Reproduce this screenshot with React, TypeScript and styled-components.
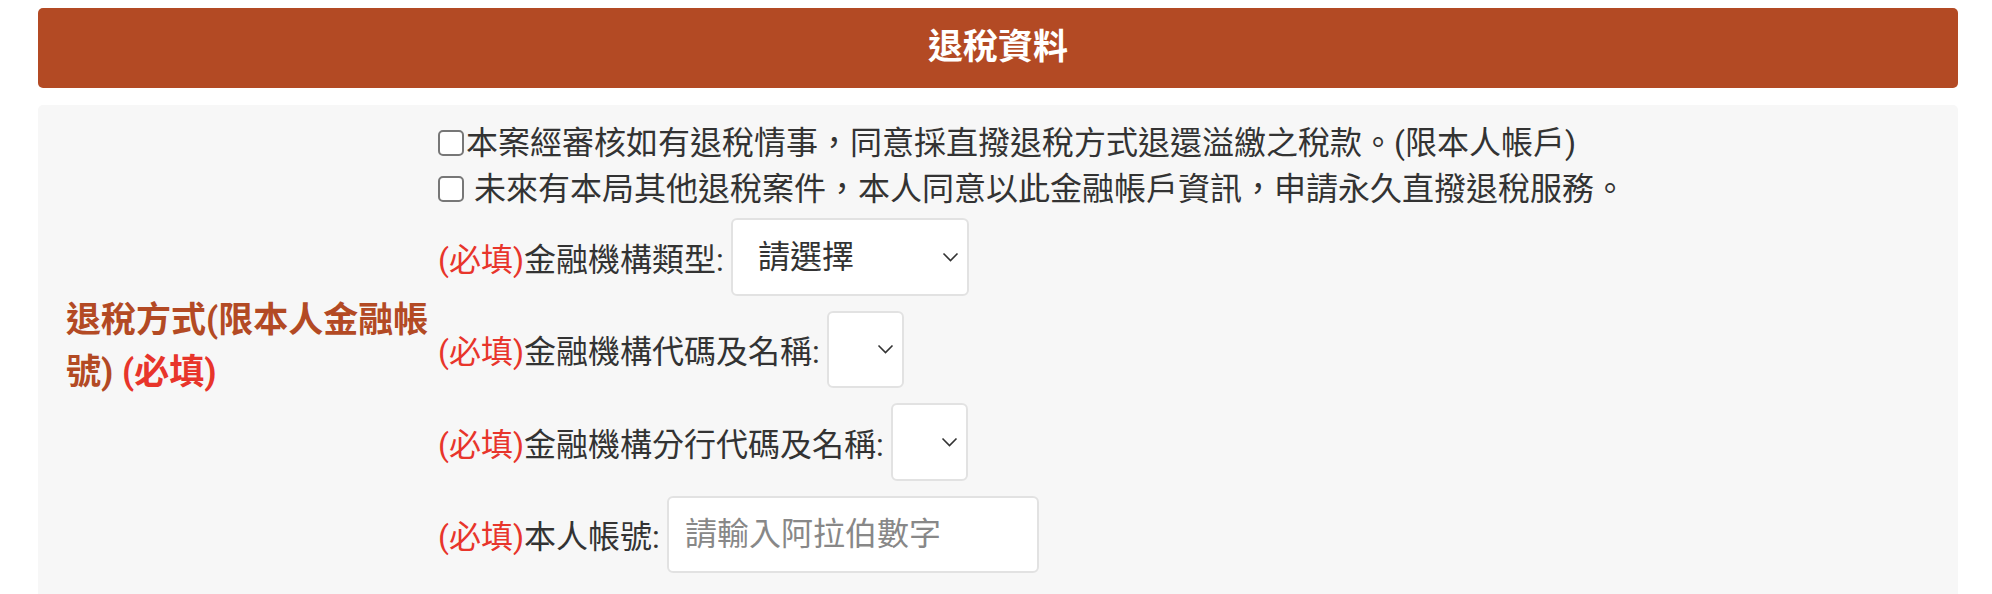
import React from "react";
import styled, { createGlobalStyle } from "styled-components";

const GlobalStyle = createGlobalStyle`
  html, body {
    margin: 0;
    padding: 0;
    background: #fff;
    overflow: hidden;
  }
  body {
    font-family: Roboto, "Noto Sans CJK TC", "Noto Sans", sans-serif;
    color: #333;
  }
`;

const Page = styled.div`
  padding: 8px 34px 0 38px;
  display: flex;
  flex-direction: column;
  gap: 17px;
`;

const Header = styled.div`
  height: 80px;
  line-height: 80px;
  background: #b34a24;
  color: #fff;
  border-radius: 5px;
  text-align: center;
  font-size: 35px;
  font-weight: 700;
`;

const Panel = styled.div`
  background: #f7f7f7;
  border-radius: 5px 5px 0 0;
  display: grid;
  grid-template-columns: 400px 1fr;
  padding: 15px 0 21px;
`;

const FieldLabel = styled.div`
  align-self: center;
  padding: 0 4px 0 28px;
  font-size: 35px;
  line-height: 52px;
  font-weight: 700;
  color: #b34a24;
`;

const Required = styled.span<{ $bold?: boolean }>`
  color: #e8352b;
  font-weight: ${(p) => (p.$bold ? 700 : 400)};
`;

const FieldBody = styled.div`
  display: flex;
  flex-direction: column;
  font-size: 32px;
`;

const CheckLine = styled.label`
  display: flex;
  align-items: center;
  height: 46px;
  line-height: 46px;
  white-space: nowrap;
`;

const Check = styled.input<{ $gap: number }>`
  appearance: none;
  width: 26px;
  height: 26px;
  margin: 0 ${(p) => p.$gap}px 0 0;
  border: 2px solid #777;
  border-radius: 5px;
  background: #fff;
  flex: none;
`;

const FormRow = styled.div<{ $first?: boolean }>`
  display: flex;
  align-items: center;
  height: 77.5px;
  margin-top: ${(p) => (p.$first ? 6 : 15)}px;
  white-space: nowrap;
`;

const SelectWrap = styled.div<{ $width: number }>`
  position: relative;
  width: ${(p) => p.$width}px;
  height: 100%;
  margin-left: 7px;
`;

const Select = styled.select`
  appearance: none;
  width: 100%;
  height: 100%;
  box-sizing: border-box;
  border: 2px solid #e2e2e2;
  border-radius: 6px;
  background: #fff;
  padding: 0 0 0 25px;
  font: inherit;
  font-size: 32px;
  color: #333;
  outline: none;
`;

const Chevron = styled.svg`
  position: absolute;
  right: 10px;
  top: 50%;
  margin-top: -5px;
  pointer-events: none;
`;

const TextInput = styled.input`
  width: 372px;
  height: 100%;
  box-sizing: border-box;
  margin-left: 7px;
  border: 2px solid #e2e2e2;
  border-radius: 6px;
  background: #fff;
  padding: 0 0 0 16px;
  font: inherit;
  font-size: 32px;
  color: #333;
  outline: none;
  &::placeholder {
    color: #888;
  }
`;

const Dropdown = ({ width, options }: { width: number; options: string[] }) => (
  <SelectWrap $width={width}>
    <Select defaultValue={options[0]}>
      {options.map((o) => (
        <option key={o}>{o}</option>
      ))}
    </Select>
    <Chevron width="17" height="10" viewBox="0 0 17 10">
      <path d="M1.5 1.5l7 7 7-7" fill="none" stroke="#333" strokeWidth="1.6" />
    </Chevron>
  </SelectWrap>
);

const App = () => {
  return (
    <>
      <GlobalStyle />
      <Page>
        <Header>退稅資料</Header>
        <Panel>
          <FieldLabel>
            退稅方式(限本人金融帳號) <Required $bold>(必填)</Required>
          </FieldLabel>
          <FieldBody>
            <CheckLine>
              <Check type="checkbox" $gap={2} />
              本案經審核如有退稅情事，同意採直撥退稅方式退還溢繳之稅款。(限本人帳戶)
            </CheckLine>
            <CheckLine>
              <Check type="checkbox" $gap={10} />
              未來有本局其他退稅案件，本人同意以此金融帳戶資訊，申請永久直撥退稅服務。
            </CheckLine>
            <FormRow $first>
              <Required>(必填)</Required>金融機構類型:
              <Dropdown width={238} options={["請選擇"]} />
            </FormRow>
            <FormRow>
              <Required>(必填)</Required>金融機構代碼及名稱:
              <Dropdown width={77} options={[]} />
            </FormRow>
            <FormRow>
              <Required>(必填)</Required>金融機構分行代碼及名稱:
              <Dropdown width={77} options={[]} />
            </FormRow>
            <FormRow>
              <Required>(必填)</Required>本人帳號:
              <TextInput placeholder="請輸入阿拉伯數字" />
            </FormRow>
          </FieldBody>
        </Panel>
      </Page>
    </>
  );
};

export default App;
